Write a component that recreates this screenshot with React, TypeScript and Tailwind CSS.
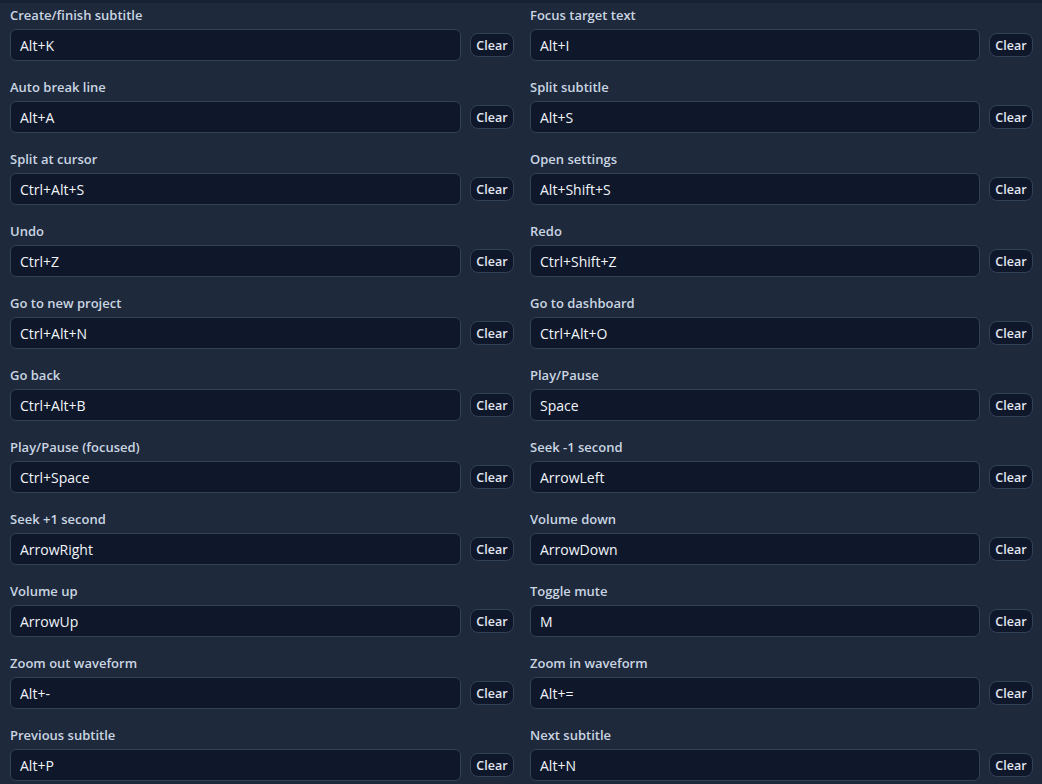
import React from "react";

const shortcuts: { label: string; keys: string }[] = [
    { label: "Create/finish subtitle", keys: "Alt+K" },
    { label: "Focus target text", keys: "Alt+I" },
    { label: "Auto break line", keys: "Alt+A" },
    { label: "Split subtitle", keys: "Alt+S" },
    { label: "Split at cursor", keys: "Ctrl+Alt+S" },
    { label: "Open settings", keys: "Alt+Shift+S" },
    { label: "Undo", keys: "Ctrl+Z" },
    { label: "Redo", keys: "Ctrl+Shift+Z" },
    { label: "Go to new project", keys: "Ctrl+Alt+N" },
    { label: "Go to dashboard", keys: "Ctrl+Alt+O" },
    { label: "Go back", keys: "Ctrl+Alt+B" },
    { label: "Play/Pause", keys: "Space" },
    { label: "Play/Pause (focused)", keys: "Ctrl+Space" },
    { label: "Seek -1 second", keys: "ArrowLeft" },
    { label: "Seek +1 second", keys: "ArrowRight" },
    { label: "Volume down", keys: "ArrowDown" },
    { label: "Volume up", keys: "ArrowUp" },
    { label: "Toggle mute", keys: "M" },
    { label: "Zoom out waveform", keys: "Alt+-" },
    { label: "Zoom in waveform", keys: "Alt+=" },
    { label: "Previous subtitle", keys: "Alt+P" },
    { label: "Next subtitle", keys: "Alt+N" },
];

export default function App() {
    return (
        <div
            className="w-[1042px] h-[784px] overflow-hidden bg-[#1e293b] text-slate-200"
            style={{ fontFamily: '"Open Sans", "Noto Sans", sans-serif' }}
        >
            {/* top edge of the panel above */}
            <div className="h-[3px] bg-[#182232]" />

            <div className="grid grid-cols-[504px_503px] gap-x-4 gap-y-4 px-[10px] pt-[2px]">
                {shortcuts.map((s) => (
                    <div key={s.label}>
                        <label className="block h-5 leading-5 text-[13px] font-semibold text-slate-300">{s.label}</label>
                        <div className="mt-1 flex items-center gap-[9px]">
                            <input
                                readOnly
                                value={s.keys}
                                className="h-8 flex-1 min-w-0 rounded-md border border-slate-700 bg-[#0f172a] px-[9px] text-[14px] text-slate-100 outline-none"
                            />
                            <button className="flex h-6 w-11 items-center justify-center rounded-lg border border-slate-700 bg-[#0f172a] pt-[3px] text-[12.5px] leading-none font-semibold text-slate-200">
                                Clear
                            </button>
                        </div>
                    </div>
                ))}
            </div>
        </div>
    );
}
